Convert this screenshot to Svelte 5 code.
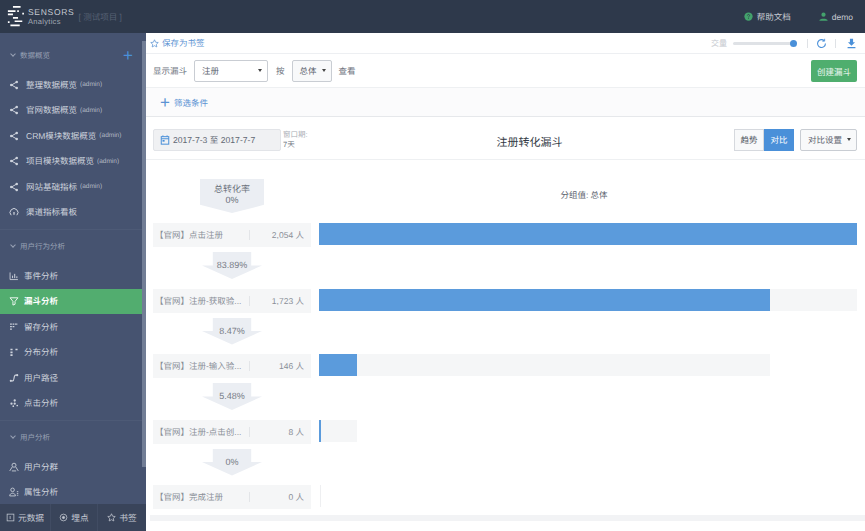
<script lang="ts">
  const groups = [
    {
      title: "数据概览",
      plus: true,
      items: [
        { icon: "share", label: "整理数据概览", admin: true },
        { icon: "share", label: "官网数据概览", admin: true },
        { icon: "share", label: "CRM模块数据概览", admin: true },
        { icon: "share", label: "项目模块数据概览", admin: true },
        { icon: "share", label: "网站基础指标", admin: true },
        { icon: "gauge", label: "渠道指标看板" },
      ],
    },
    {
      title: "用户行为分析",
      items: [
        { icon: "chart", label: "事件分析" },
        { icon: "funnel", label: "漏斗分析", active: true },
        { icon: "retain", label: "留存分析" },
        { icon: "dist", label: "分布分析" },
        { icon: "path", label: "用户路径" },
        { icon: "click", label: "点击分析" },
      ],
    },
    {
      title: "用户分析",
      items: [
        { icon: "group", label: "用户分群" },
        { icon: "attr", label: "属性分析" },
      ],
    },
  ];

  const steps = [
    { name: "【官网】点击注册", count: "2,054 人", track: 100, fill: 100, rate: "83.89%" },
    { name: "【官网】注册-获取验...", count: "1,723 人", track: 100, fill: 83.9, rate: "8.47%" },
    { name: "【官网】注册-输入验...", count: "146 人", track: 83.9, fill: 7.1, rate: "5.48%" },
    { name: "【官网】注册-点击创...", count: "8 人", track: 7.1, fill: 0.4, rate: "0%" },
    { name: "【官网】完成注册", count: "0 人", track: 0, fill: 0 },
  ];
</script>

{#snippet navIcon(name)}
  <svg class="nav-icon" viewBox="0 0 14 14" fill="none" stroke="currentColor" stroke-width="1.2">
    {#if name === "share"}
      <path d="M10.500 3 3.500 7l7 4" stroke-width="1.400" />
      <circle cx="10.800" cy="2.800" r="1.800" fill="currentColor" stroke="none" />
      <circle cx="3.200" cy="7" r="1.800" fill="currentColor" stroke="none" />
      <circle cx="10.800" cy="11.200" r="1.800" fill="currentColor" stroke="none" />
    {:else if name === "gauge"}
      <path d="M3 11.500a5.500 5.500 0 1 1 8 0" stroke-width="1.400" />
      <path d="M7 11V7" stroke-width="1.800" />
    {:else if name === "chart"}
      <path d="M1.500 2v10h11" />
      <path d="M5 10V6.500M8 10V4M11 10V7.500" stroke-width="1.400" />
    {:else if name === "funnel"}
      <path d="M1.500 2.500h11L8.500 7.500v4l-3 1.200V7.500z" />
    {:else if name === "retain"}
      <path d="M1.500 3h11M1.500 6.500h6M1.500 10h3" stroke-width="2" stroke-dasharray="2.500 1" />
    {:else if name === "dist"}
      <path d="M2 3.500h3M9 3.500h3M2 7.500h3M2 11.500h3" stroke-width="2.400" />
    {:else if name === "path"}
      <path d="M3 11h2.500c2 0 1-8 3.500-8H11" stroke-width="1.600" />
      <circle cx="2.500" cy="11" r="1.500" fill="currentColor" stroke="none" />
      <circle cx="11.500" cy="3" r="1.500" fill="currentColor" stroke="none" />
    {:else if name === "click"}
      <circle cx="8" cy="3.500" r="1.600" fill="currentColor" stroke="none" />
      <circle cx="3.500" cy="8" r="1.600" fill="currentColor" stroke="none" />
      <circle cx="8" cy="8" r="1.600" fill="currentColor" stroke="none" />
      <circle cx="11.500" cy="10.500" r="1.200" fill="currentColor" stroke="none" />
      <circle cx="6" cy="11.500" r="1.200" fill="currentColor" stroke="none" />
    {:else if name === "group"}
      <circle cx="7" cy="4.500" r="2.800" />
      <path d="M1 12.500 4.500 7M13 12.500 9.500 7M4 12.500h6" />
    {:else if name === "attr"}
      <circle cx="5" cy="4" r="2.500" />
      <path d="M1 12.500c0-5 8-5 8 0zM11 6.500h2M11 9h2M11 11.500h2" />
    {/if}
  </svg>
{/snippet}

<div class="page">
  <header class="topbar">
    <div class="brand">
      <svg class="logo" viewBox="0 0 20 26" fill="#fff">
        <path d="M7 0h9v2H7zM1 5h9v2H1zM1 9h6v2H1zM12 5h2v2h-2zM18 8h2v2h-2zM7 13h6v2H7zM9 17h9v2H9zM1 18h2v2H1zM4 22h11v2H4z" />
      </svg>
      <div class="brand-name">
        <span class="sensors">SENSORS</span>
        <span class="analytics">Analytics</span>
      </div>
      <span class="project">[ 测试项目 ]</span>
    </div>
    <div class="top-links">
      <span class="top-link">
        <svg viewBox="0 0 12 12" class="top-icon"><circle cx="6" cy="6" r="5.500" fill="#43a26c" /><path d="M4.500 4.800a1.500 1.500 0 1 1 2.200 1.300c-.5.300-.7.500-.7 1M6 8.200v1" stroke="#2f3a4c" fill="none" /></svg>
        帮助文档
      </span>
      <span class="top-link">
        <svg viewBox="0 0 12 12" class="top-icon"><circle cx="6" cy="3.500" r="2.800" fill="#43a26c" /><path d="M.5 11.500c0-3.500 11-3.500 11 0z" fill="#43a26c" /></svg>
        demo
      </span>
    </div>
  </header>

  <div class="body">
    <aside class="sidebar">
      <div class="nav">
        {#each groups as group}
          <section class="group">
            <div class="group-title">
              <span class="chev"></span>
              <span>{group.title}</span>
              {#if group.plus}<span class="group-plus">+</span>{/if}
            </div>
            {#each group.items as item}
              <div class="nav-item" class:active={item.active}>
                {@render navIcon(item.icon)}
                <span class:wide={item.icon === "share" || item.icon === "gauge"}>{item.label}</span>
                {#if item.admin}<small>(admin)</small>{/if}
              </div>
            {/each}
          </section>
        {/each}
      </div>
      <div class="scroll-thumb"></div>
      <footer class="side-foot">
        <span>
          <svg viewBox="0 0 12 12" fill="none" stroke="currentColor"><rect x="1.500" y="1.500" width="9" height="9" /><path d="M5.500 4v4" /></svg>
          元数据
        </span>
        <span>
          <svg viewBox="0 0 12 12" fill="none" stroke="currentColor"><circle cx="6" cy="6" r="4.500" /><circle cx="6" cy="6" r="1.500" fill="currentColor" /></svg>
          埋点
        </span>
        <span>
          <svg viewBox="0 0 12 12" fill="none" stroke="currentColor"><path d="m6 1 1.500 3.300 3.500.4-2.600 2.400.7 3.500L6 8.900l-3.100 1.700.7-3.500L1 4.700l3.500-.4z" /></svg>
          书签
        </span>
      </footer>
    </aside>

    <main class="main">
      <div class="bookmark-row">
        <span class="bookmark">
          <svg viewBox="0 0 12 12" fill="none" stroke="currentColor"><path d="m6 1 1.500 3.300 3.500.4-2.600 2.400.7 3.500L6 8.900l-3.100 1.700.7-3.500L1 4.700l3.500-.4z" /></svg>
          保存为书签
        </span>
        <div class="tools">
          <span class="zoom-label">交量</span>
          <span class="slider"><i></i></span>
          <span class="sep"></span>
          <svg class="tool" viewBox="0 0 14 14" fill="none" stroke="#4a90d9" stroke-width="1.400"><path d="M12 7a5 5 0 1 1-1.500-3.500" /><path d="M11 1v3H8" stroke-width="1.100" /></svg>
          <span class="sep"></span>
          <svg class="tool" viewBox="0 0 14 14" fill="#4a90d9"><path d="M5 1h4v4.500h2.500L7 10 2.500 5.500H5zM2 11.500h10V13H2z" /></svg>
        </div>
      </div>

      <div class="query-row">
        <span class="muted">显示漏斗</span>
        <span class="select funnel-select">注册<i class="caret"></i></span>
        <span class="muted by">按</span>
        <span class="select by-select">总体<i class="caret"></i></span>
        <span class="muted">查看</span>
        <button class="create">创建漏斗</button>
      </div>

      <div class="filter-row"><span class="filter-plus">+</span>筛选条件</div>

      <div class="title-row">
        <div class="date-box">
          <svg viewBox="0 0 12 12" fill="none" stroke="#4a90d9" stroke-width="1.200"><rect x="1.500" y="2" width="9" height="9" /><path d="M1.500 4.500h9M3.500.5V2M8.500.5V2" /><rect x="3" y="6" width="2.500" height="2" fill="#4a90d9" stroke="none" /></svg>
          2017-7-3 至 2017-7-7
        </div>
        <div class="window"><span>窗口期:</span><span class="days">7天</span></div>
        <h1>注册转化漏斗</h1>
        <div class="actions">
          <div class="toggle"><span>趋势</span><span class="on">对比</span></div>
          <span class="select compare">对比设置<i class="caret"></i></span>
        </div>
      </div>

      <div class="chart">
        <div class="chart-head">
          <div class="total-arrow"><span>总转化率</span><span>0%</span></div>
          <div class="group-value">分组值: 总体</div>
        </div>
        {#each steps as step}
          <div class="step">
            <div class="step-label">
              <span class="step-name">{step.name}</span>
              <span class="step-count">{step.count}</span>
            </div>
            <div class="bar-area">
              {#if step.track}
                <div class="track" style="width: {step.track}%">
                  <div class="fill" style="width: {(step.fill / step.track) * 100}%"></div>
                </div>
              {:else}
                <div class="empty-bar"></div>
              {/if}
            </div>
          </div>
          {#if step.rate}
            <div class="rate-row"><div class="rate-arrow">{step.rate}</div></div>
          {/if}
        {/each}
        <div class="chart-foot"></div>
      </div>
    </main>
  </div>
</div>

<style>
  :global(body) {
    background: #fff;
    overflow: hidden;
  }

  * {
    box-sizing: border-box;
  }

  .page {
    display: flex;
    flex-direction: column;
    font-family: "Liberation Sans", "Noto Sans CJK SC", sans-serif;
    height: 531px;
    overflow: hidden;
    text-rendering: geometricPrecision;
    width: 865px;
  }

  .topbar {
    align-items: center;
    background: #2e394b;
    display: flex;
    flex: none;
    height: 33px;
    justify-content: space-between;
  }

  .brand {
    align-items: center;
    display: flex;
    padding-left: 7px;
  }

  .logo {
    height: 22px;
    width: 17px;
  }

  .brand-name {
    color: #c5cad2;
    display: flex;
    flex-direction: column;
    line-height: 9px;
    margin-left: 4px;
  }

  .sensors {
    font-size: 8.500px;
    letter-spacing: 0.700px;
  }

  .analytics {
    color: #a2a9b5;
    font-size: 7.500px;
    letter-spacing: 0.300px;
  }

  .project {
    color: #566174;
    font-size: 8.500px;
    margin-left: 4px;
    white-space: nowrap;
  }

  .top-links {
    align-items: center;
    color: #c6cad1;
    display: flex;
    font-size: 8.500px;
    gap: 28px;
    padding-right: 12px;
  }

  .top-link {
    align-items: center;
    display: flex;
    gap: 4px;
  }

  .top-icon {
    height: 9px;
    width: 9px;
  }

  .body {
    display: flex;
    flex: 1;
    min-height: 0;
  }

  .sidebar {
    background: #465370;
    color: #cdd2dc;
    display: flex;
    flex: none;
    flex-direction: column;
    position: relative;
    width: 146px;
  }

  .nav {
    flex: 1;
    overflow: hidden;
    padding-right: 4px;
    padding-top: 10px;
  }

  .group {
    border-bottom: 1px solid #4d5a76;
    margin-bottom: 4px;
    padding-bottom: 4px;
  }

  .group:last-child {
    border-bottom: 0;
  }

  .group-title {
    align-items: center;
    color: #98a1b4;
    display: flex;
    font-size: 7.500px;
    gap: 5px;
    height: 24px;
    margin-bottom: 5px;
    padding-left: 11px;
    position: relative;
  }

  .chev {
    border-bottom: 1px solid #98a1b4;
    border-right: 1px solid #98a1b4;
    height: 4px;
    margin-top: -2px;
    transform: rotate(45deg);
    width: 4px;
  }

  .group-plus {
    color: #4a90d9;
    font-size: 17px;
    position: absolute;
    right: 9px;
    top: 3px;
  }

  .nav-item {
    align-items: center;
    display: flex;
    font-size: 8.500px;
    height: 25.500px;
    padding-left: 9px;
  }

  .nav-item .wide {
    margin-left: 2px;
  }

  .nav-item small {
    font-size: 6.500px;
    margin-left: 3px;
    opacity: 0.8;
  }

  .nav-icon {
    flex: none;
    height: 10px;
    margin-right: 5px;
    width: 10px;
  }

  .nav-item.active {
    background: #52ad6f;
    color: #fff;
    font-weight: 700;
  }

  .scroll-thumb {
    background: #717d95;
    bottom: 64px;
    position: absolute;
    right: 0;
    top: 8px;
    width: 4px;
  }

  .side-foot {
    background: #39445a;
    color: #c4c9d3;
    display: grid;
    flex: none;
    font-size: 8.700px;
    grid-template-columns: 50px 47px 49px;
    height: 27px;
  }

  .side-foot span {
    align-items: center;
    display: flex;
    gap: 3px;
    justify-content: center;
  }

  .side-foot span + span {
    border-left: 1px solid #414c63;
  }

  .side-foot svg {
    height: 9px;
    width: 9px;
  }

  .main {
    display: flex;
    flex: 1;
    flex-direction: column;
    min-width: 0;
  }

  .bookmark-row {
    align-items: center;
    border-bottom: 1px solid #edeff2;
    display: flex;
    flex: none;
    height: 21px;
    justify-content: space-between;
    padding: 0 8px 0 4px;
  }

  .bookmark {
    align-items: center;
    color: #5b93d3;
    display: flex;
    font-size: 8.500px;
    gap: 3px;
  }

  .bookmark svg {
    height: 9px;
    width: 9px;
  }

  .tools {
    align-items: center;
    display: flex;
  }

  .zoom-label {
    color: #c3c7cd;
    font-size: 8px;
    margin-right: 6px;
  }

  .slider {
    background: #dfe2e6;
    border-radius: 2px;
    display: block;
    height: 3px;
    position: relative;
    width: 62px;
  }

  .slider i {
    background: #4a90d9;
    border-radius: 50%;
    height: 7px;
    position: absolute;
    right: -2px;
    top: -2px;
    width: 7px;
  }

  .sep {
    background: #dfe2e6;
    height: 9px;
    margin: 0 8px 0 12px;
    width: 1px;
  }

  .tools .sep + .tool + .sep {
    margin: 0 10px 0 8px;
  }

  .tool {
    height: 11px;
    width: 11px;
  }

  .query-row {
    align-items: center;
    border-bottom: 1px solid #eef0f2;
    color: #6e7480;
    display: flex;
    flex: none;
    font-size: 8.500px;
    height: 34px;
    padding: 0 8px 0 7px;
  }

  .select {
    align-items: center;
    background: #fff;
    border: 1px solid #c9cdd3;
    border-radius: 2px;
    color: #5d636e;
    display: flex;
    height: 22px;
    justify-content: space-between;
    padding: 0 5px 0 7px;
  }

  .caret {
    border-left: 2.500px solid transparent;
    border-right: 2.500px solid transparent;
    border-top: 3px solid #444;
  }

  .funnel-select {
    margin-left: 7px;
    width: 74px;
  }

  .by {
    margin: 0 7px 0 8px;
  }

  .by-select {
    background: #f8f9fa;
    margin-right: 7px;
    width: 40px;
  }

  .create {
    background: #4fae6e;
    border: 0;
    border-radius: 2px;
    color: #eaf6ee;
    font: inherit;
    height: 22px;
    margin-left: auto;
    padding: 0;
    width: 46px;
  }

  .filter-row {
    align-items: center;
    background: #fbfbfc;
    border-bottom: 1px solid #e6e8eb;
    color: #5b93d3;
    display: flex;
    flex: none;
    font-size: 8.500px;
    gap: 4px;
    height: 29px;
    padding: 1px 0 0 14px;
  }

  .filter-plus {
    font-size: 17px;
    line-height: 16px;
  }

  .title-row {
    align-items: center;
    border-bottom: 1px solid #eef0f2;
    display: flex;
    flex: none;
    height: 43px;
    padding: 3px 8px 0 7px;
    position: relative;
  }

  .date-box {
    align-items: center;
    background: #f0f1f3;
    border: 1px solid #e2e4e8;
    border-radius: 2px;
    color: #626873;
    display: flex;
    font-size: 8.600px;
    gap: 3px;
    height: 22px;
    padding-left: 6px;
    width: 128px;
  }

  .date-box svg {
    height: 10px;
    width: 10px;
  }

  .window {
    color: #a9adb4;
    display: flex;
    flex-direction: column;
    font-size: 7.500px;
    line-height: 10px;
    margin-left: 2px;
  }

  .days {
    color: #6e7480;
  }

  h1 {
    color: #333a45;
    font-size: 11px;
    font-weight: 400;
    left: 0;
    margin: 0;
    position: absolute;
    right: -48px;
    text-align: center;
    top: 17px;
  }

  .actions {
    align-items: center;
    display: flex;
    gap: 6px;
    margin-left: auto;
    position: relative;
  }

  .toggle {
    display: flex;
    font-size: 8.500px;
    height: 22px;
  }

  .toggle span {
    align-items: center;
    background: #f8f9fa;
    border: 1px solid #d6d9de;
    color: #4e5460;
    display: flex;
    justify-content: center;
    width: 30px;
  }

  .toggle .on {
    background: #4a90d9;
    border-color: #4a90d9;
    color: #fff;
  }

  .compare {
    background: #f8f9fa;
    font-size: 8.500px;
    height: 22px;
    width: 57px;
  }

  .chart {
    flex: 1;
    padding: 0 8px 0 7px;
  }

  .chart-head {
    display: grid;
    grid-template-columns: 158px 1fr;
    height: 63px;
  }

  .total-arrow {
    align-items: center;
    background: #ebeef3;
    clip-path: polygon(0 0, 100% 0, 100% 76%, 50% 100%, 0 76%);
    color: #6c727c;
    display: flex;
    flex-direction: column;
    font-size: 9px;
    height: 34px;
    justify-self: center;
    line-height: 11px;
    margin-top: 19px;
    padding-top: 5px;
    width: 64px;
  }

  .group-value {
    color: #5d636e;
    font-size: 8.500px;
    margin-top: 29px;
    text-align: center;
  }

  .step {
    display: grid;
    gap: 8px;
    grid-template-columns: 158px 1fr;
    height: 24px;
  }

  .step-label {
    align-items: center;
    background: #f5f6f7;
    color: #8a8f98;
    display: flex;
    font-size: 8.500px;
    padding: 0 7px 0 2px;
  }

  .step-name {
    border-right: 1px solid #e3e5e8;
    line-height: 10px;
    white-space: nowrap;
    width: 95px;
  }

  .step-count {
    flex: 1;
    text-align: right;
  }

  .track {
    background: #f5f6f7;
    height: 22px;
  }

  .fill {
    background: #5b9bdc;
    height: 100%;
    min-width: 2px;
  }

  .empty-bar {
    background: #eeeff1;
    height: 22px;
    margin-left: 1px;
    width: 1px;
  }

  .rate-row {
    display: flex;
    height: 41.500px;
    justify-content: center;
    width: 158px;
  }

  .rate-arrow {
    background: #ebeef3;
    clip-path: polygon(18% 0, 82% 0, 82% 50%, 100% 50%, 50% 100%, 0 50%, 18% 50%);
    color: #777c86;
    font-size: 9px;
    height: 27px;
    margin-top: 5px;
    padding-top: 8px;
    text-align: center;
    width: 60px;
  }

  .chart-foot {
    background: #f2f3f5;
    height: 6px;
    margin: 6px -8px 0 -3px;
  }
</style>
